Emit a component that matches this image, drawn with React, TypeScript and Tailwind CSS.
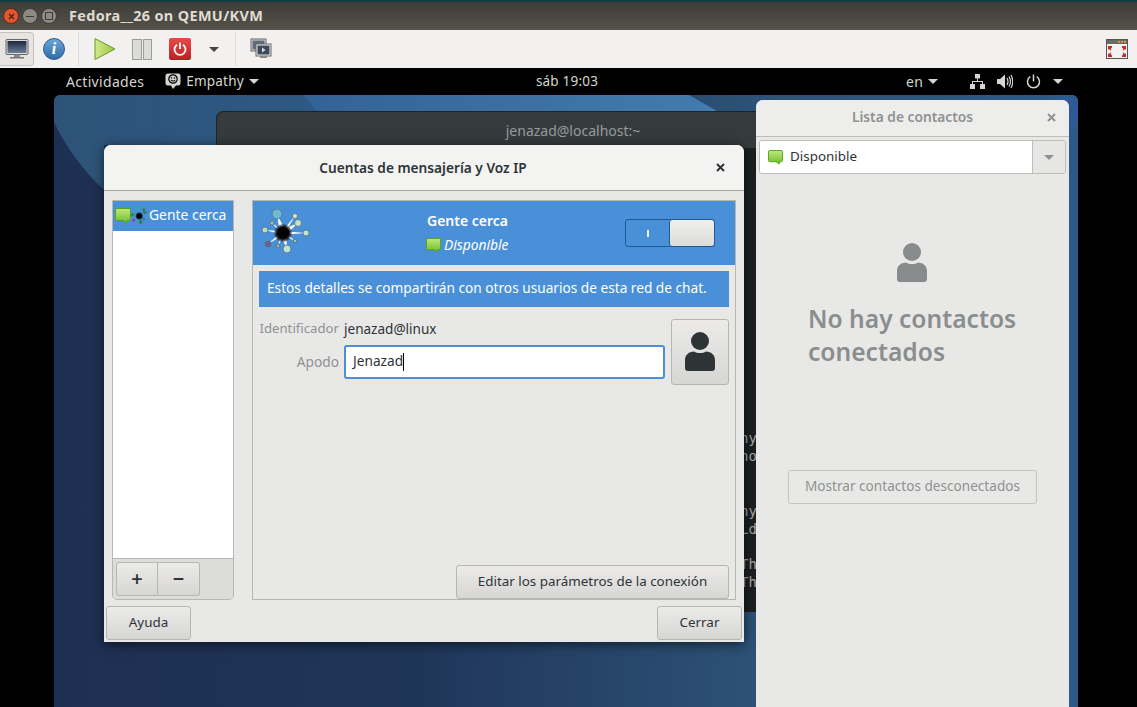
import React from "react";

const F = { fontFamily: '"Noto Sans", "Open Sans", sans-serif' };

function Bubble({ size = 16 }: { size?: number }) {
  return (
    <svg width={size} height={size} viewBox="0 0 16 16" className="shrink-0">
      <defs>
        <linearGradient id="bub" x1="0" y1="0" x2="0" y2="1">
          <stop offset="0" stopColor="#bdea7c" />
          <stop offset="1" stopColor="#6fbb2c" />
        </linearGradient>
      </defs>
      <path d="M2 .5h12a1.500 1.500 0 0 1 1.500 1.500v9a1.500 1.500 0 0 1-1.500 1.500h-2v2.500l-3.500-2.500H2A1.500 1.500 0 0 1 .5 11V2A1.500 1.500 0 0 1 2 .5z" fill="url(#bub)" stroke="#5aa016" strokeWidth="1" />
    </svg>
  );
}

const NODES: [number, number, number, string][] = [
  [16, 5, 5, "#6fb9d6"],
  [34, 7, 2.5, "#d5e8d0"],
  [37, 14, 3.5, "#c4e0cb"],
  [45, 24, 3, "#c4e4d0"],
  [34, 32, 1.7, "#a9c4b4"],
  [26, 40, 4, "#bfe0d2"],
  [17, 37, 2, "#94aaa8"],
  [7, 35, 3, "#6d5f95"],
  [4, 21, 3, "#bcdcc0"],
  [11, 14, 2, "#a8bdb8"],
];

function People({ size, mono = false }: { size: number; mono?: boolean }) {
  const id = mono ? "coreA" : "coreB";
  return (
    <svg width={size} height={size} viewBox="0 0 48 48" className="shrink-0">
      <defs>
        <radialGradient id={id}>
          <stop offset="0" stopColor="#000" />
          <stop offset="0.65" stopColor="#050505" />
          <stop offset="1" stopColor="#222" stopOpacity="0.35" />
        </radialGradient>
      </defs>
      {!mono && NODES.map(([x, y, r], i) => {
        const dx = x - 22;
        const dy = y - 24;
        const l = Math.hypot(dx, dy);
        const w = r > 3 ? 3.2 : 1.8;
        const nx = (-dy / l) * w;
        const ny = (dx / l) * w;
        return <path key={i} d={`M${22 + nx} ${24 + ny}L${x} ${y}L${22 - nx} ${24 - ny}z`} fill="#ffffff" />;
      })}
      {NODES.map(([x, y, r, c], i) => (
        <circle key={i} cx={x} cy={y} r={mono ? r * 0.9 + 1.5 : r} fill={mono ? (i % 3 === 0 ? "#3b9ec4" : i === 7 ? "#8a4aa0" : "#2f7d5a") : c} stroke={mono ? "none" : "#54707a"} strokeWidth="0.8" />
      ))}
      <circle cx="22" cy="24" r={mono ? 10 : 9} fill={`url(#${id})`} />
    </svg>
  );
}

function Person({ color, w = 30, h = 39 }: { color: string; w?: number; h?: number }) {
  return (
    <svg width={w} height={h} viewBox="0 0 30 39">
      <circle cx="15" cy="9" r="9" fill={color} />
      <path d="M9 19.500c3.500 2 8.500 2 12 0 5 0 9 3.500 9 8.500V36a3 3 0 0 1-3 3H3a3 3 0 0 1-3-3v-8C0 23 4 19.500 9 19.500z" fill={color} />
    </svg>
  );
}

function X({ color = "#2e3436" }: { color?: string }) {
  return (
    <svg width="9" height="9" viewBox="0 0 9 9">
      <path d="M1 1l7 7M8 1L1 8" stroke={color} strokeWidth="2" />
    </svg>
  );
}

function Caret({ color, w = 10, h = 5 }: { color: string; w?: number; h?: number }) {
  return (
    <svg width={w} height={h} viewBox="0 0 10 5" className="block">
      <path d="M0 0h10L5 5z" fill={color} />
    </svg>
  );
}

function Btn({ className, children }: { className: string; children: React.ReactNode }) {
  return (
    <div className={"flex items-center justify-center rounded-[3px] border border-[#b6b6b3] bg-gradient-to-b from-[#ecebea] to-[#d6d6d4] text-[#2e3436] text-[13.400px] pb-[1px] " + className}>
      {children}
    </div>
  );
}

function TitleBar() {
  return (
    <div className="h-[30px] shrink-0 bg-gradient-to-b from-[#3e3d38] to-[#55524a] border-t-[2px] border-[#123c44] flex items-center pl-[3px]">
      <div className="flex items-center gap-[3px]">
        <div className="w-[16px] h-[16px] rounded-full bg-[#e2562f] border border-[#5a2a18] flex items-center justify-center">
          <svg width="7" height="7" viewBox="0 0 7 7"><path d="M1 1l5 5M6 1L1 6" stroke="#40201a" strokeWidth="1.300" /></svg>
        </div>
        <div className="w-[16px] h-[16px] rounded-full bg-[#8c8a82] border border-[#3c3b37] flex items-center justify-center">
          <div className="w-[8px] h-[1px] bg-[#3c3b37]" />
        </div>
        <div className="w-[16px] h-[16px] rounded-full bg-[#8c8a82] border border-[#3c3b37] flex items-center justify-center">
          <div className="w-[8px] h-[8px] border border-[#3c3b37]" />
        </div>
      </div>
      <span className="ml-[12px] text-[14.450px] font-bold text-[#dfdbd2] tracking-[0.35px] leading-none">Fedora__26 on QEMU/KVM</span>
    </div>
  );
}

function Toolbar() {
  return (
    <div className="h-[38px] shrink-0 bg-[#f2f1ef] flex items-center relative">
      <div className="w-[34px] h-[34px] rounded-r-[4px] border border-l-0 border-[#c4c3c0] bg-[#e6e5e2] flex items-center justify-center">
        <svg width="24" height="24" viewBox="0 0 24 24">
          <defs>
            <linearGradient id="scr" x1="0" y1="0" x2="0" y2="1">
              <stop offset="0" stopColor="#1d2a3f" />
              <stop offset="1" stopColor="#6b7d96" />
            </linearGradient>
          </defs>
          <rect x="1" y="2.500" width="22" height="15" rx="1" fill="#dcdcdc" stroke="#666" />
          <rect x="2.500" y="4" width="19" height="12" fill="url(#scr)" />
          <rect x="9" y="17.500" width="6" height="2.500" fill="#888" />
          <rect x="5" y="20" width="14" height="1.500" fill="#777" />
        </svg>
      </div>
      <div className="ml-[9px] w-[22px] h-[22px] rounded-full bg-gradient-to-b from-[#6ea5d8] to-[#2f6ca8] border border-[#2a5a90] flex items-center justify-center text-white font-bold italic text-[16px] leading-none" style={{ fontFamily: '"Liberation Serif", serif' }}>
        i
      </div>
      <div className="ml-[13px] w-px h-[34px] bg-[#dddcd9]" />
      <div className="ml-[15px]">
        <svg width="22" height="22" viewBox="0 0 22 22" className="block">
          <defs>
            <linearGradient id="pl" x1="0" y1="0" x2="1" y2="0">
              <stop offset="0" stopColor="#d3e88d" />
              <stop offset="1" stopColor="#9cc744" />
            </linearGradient>
          </defs>
          <path d="M1 .5L21 11 1 21.500z" fill="url(#pl)" stroke="#6a9a1f" />
        </svg>
      </div>
      <div className="ml-[16px] flex gap-[1px]">
        <div className="w-[10px] h-[21px] bg-[#dcdcd8] border border-[#9c9c98]" />
        <div className="w-[9px] h-[21px] bg-[#dcdcd8] border border-[#9c9c98]" />
      </div>
      <div className="ml-[17px] w-[22px] h-[22px] rounded-[2px] bg-gradient-to-b from-[#e84a4a] to-[#bb2020] flex items-center justify-center">
        <svg width="16" height="16" viewBox="0 0 16 16" fill="none" stroke="#fff" strokeWidth="1.800">
          <path d="M5 3.800a5.500 5.500 0 1 0 6 0" />
          <path d="M8 1.500v6.500" />
        </svg>
      </div>
      <div className="ml-[18px]"><Caret color="#444" /></div>
      <div className="ml-[16px] w-px h-[34px] bg-[#dddcd9]" />
      <div className="ml-[14px]">
        <svg width="22" height="22" viewBox="0 0 22 22" className="block">
          <rect x="1" y="1" width="15" height="12" fill="#d8d8d8" stroke="#666" />
          <rect x="2.500" y="2.500" width="12" height="9" fill="#5d6b7b" />
          <rect x="6" y="6" width="15" height="12" fill="#eee" stroke="#666" />
          <rect x="7.500" y="7.500" width="12" height="9" fill="#3d4a5c" />
          <path d="M12 9.500l3.500 2.500-3.500 2.500z" fill="#ddd" />
          <rect x="10" y="18" width="7" height="2" fill="#888" />
        </svg>
      </div>
      <div className="ml-auto mr-[9px]">
        <svg width="22" height="20" viewBox="0 0 22 20" className="block">
          <rect x="0.500" y="0.500" width="21" height="19" fill="#f4f2f0" stroke="#555" />
          <rect x="1" y="1" width="20" height="4" fill="#6b6a67" />
          <path d="M12 2h2v1.500h-2zM15 2h2v1.500h-2zM18 2h2v1.500h-2z" fill="#e8a33a" />
          <path d="M2 7h4v1.500L4.500 10l1 1-1 .5L3 10 2 11zM20 7h-4v1.500l1.500 1.500-1 1 1 .5 1.500-1.500 1 1zM2 18h4v-1.500L4.500 15l1-1-1-.5L3 15l-1-1zM20 18h-4v-1.500l1.500-1.500-1-1 1-.5 1.500 1.500 1-1z" fill="#c42a2a" />
        </svg>
      </div>
    </div>
  );
}

function Panel() {
  return (
    <div className="h-[27px] shrink-0 bg-black text-[#d3d7cf] text-[13.500px] flex items-center relative tracking-[0.2px]">
      <div className="ml-[66px] text-[14px] tracking-[0.32px]">Actividades</div>
      <div className="ml-[21px] flex items-center">
        <svg width="16" height="17" viewBox="0 0 16 17">
          <path d="M3 .5h10a2.500 2.500 0 0 1 2.500 2.500v7a2.500 2.500 0 0 1-2.500 2.500h-2L8 16l-2-3.500H3A2.500 2.500 0 0 1 .5 10V3A2.500 2.500 0 0 1 3 .5z" fill="#d3d7cf" />
          <circle cx="8" cy="6" r="4.200" fill="none" stroke="#000" strokeWidth="1.200" />
          <circle cx="6.500" cy="5" r="0.800" fill="#000" />
          <circle cx="9.500" cy="5" r="0.800" fill="#000" />
          <path d="M5.800 7.200q2.200 2 4.400 0" stroke="#000" fill="none" />
        </svg>
        <span className="ml-[5px]">Empathy</span>
        <span className="ml-[5px]"><Caret color="#d3d7cf" /></span>
      </div>
      <div className="absolute left-0 right-0 top-0 h-full flex items-center justify-center">
        <span className="mr-[3px]">sáb 19:03</span>
      </div>
      <div className="ml-auto flex items-center relative mr-[74px]">
        <span className="text-[14px]">en</span>
        <span className="ml-[5px]"><Caret color="#d3d7cf" /></span>
        <svg className="ml-[32px]" width="15" height="15" viewBox="0 0 15 15" fill="#d3d7cf">
          <rect x="5" y="0" width="5" height="4.500" />
          <rect x="0" y="10" width="5" height="5" />
          <rect x="10" y="10" width="5" height="5" />
          <path d="M7 4.500h1V7h5v3h-1V8H3v2H2V7h5z" />
        </svg>
        <svg className="ml-[12px]" width="16" height="15" viewBox="0 0 16 15" fill="#d3d7cf">
          <path d="M0 5h3l5-4.500v14L3 10H0z" />
          <path d="M10 4q2 3.500 0 7M12 2.500q3 5 0 10M14 1q3.500 6.500 0 13" fill="none" stroke="#d3d7cf" strokeWidth="1.200" />
        </svg>
        <svg className="ml-[13px]" width="15" height="15" viewBox="0 0 15 15" fill="none" stroke="#d3d7cf" strokeWidth="1.500">
          <path d="M4.300 2.700a6 6 0 1 0 6.400 0" />
          <path d="M7.500 .5v7" />
        </svg>
        <span className="ml-[12px]"><Caret color="#d3d7cf" /></span>
      </div>
    </div>
  );
}

function Wallpaper() {
  return (
    <svg className="absolute inset-0" width="1024" height="612" viewBox="0 0 1024 612" preserveAspectRatio="none">
      <defs>
        <linearGradient id="wb" x1="0" y1="0" x2="1" y2="0">
          <stop offset="0" stopColor="#1d2f52" />
          <stop offset="0.35" stopColor="#1f3558" />
          <stop offset="0.7" stopColor="#2d5378" />
          <stop offset="1" stopColor="#2a5a88" />
        </linearGradient>
        <linearGradient id="wt" x1="0" y1="0" x2="1" y2="0">
          <stop offset="0" stopColor="#2e5378" />
          <stop offset="1" stopColor="#2d5a86" />
        </linearGradient>
        <linearGradient id="wh" x1="0" y1="0" x2="1" y2="0">
          <stop offset="0" stopColor="#336296" />
          <stop offset="1" stopColor="#447cae" />
        </linearGradient>
      </defs>
      <rect width="1024" height="612" fill="url(#wb)" />
      <path d="M0 0H300L330 50H50V95Q18 65 0 27z" fill="url(#wt)" />
      <path d="M250 0H635L670 20V50H290z" fill="url(#wh)" />
      <path d="M635 0H1024V30L1000 60V0z" fill="#2b5a94" />
      <path d="M1000 60L1024 30V612H1000z" fill="#2c5a88" />
    </svg>
  );
}

function Terminal() {
  const lines = [
    { y: 317, t: "ny" }, { y: 335, t: "no" }, { y: 390, t: "ny" }, { y: 408, t: "Ld" }, { y: 443, t: "Th" }, { y: 461, t: "Th" },
  ];
  return (
    <div className="absolute left-[216px] top-[111px] w-[560px] h-[501px] rounded-t-[7px] bg-[#1c2022] border border-[#1f2426] overflow-hidden">
      <div className="h-[36px] bg-[#353a3c] flex items-center justify-center text-[14px] text-[#979b9c] pl-[154px]">
        jenazad@localhost:~
      </div>
      {lines.map((l) => (
        <div key={l.y} className="absolute left-[523px] text-[14px] leading-[18px] text-[#a4a6a6]" style={{ top: l.y, fontFamily: '"DejaVu Sans Mono", monospace' }}>
          {l.t}
        </div>
      ))}
    </div>
  );
}

function Dialog() {
  return (
    <div className="absolute left-[104px] top-[145px] w-[640px] h-[497px] rounded-t-[7px] bg-[#e8e8e7] flex flex-col shadow-[0_2px_12px_rgba(0,0,0,0.6)]">
      <div className="h-[46px] shrink-0 rounded-t-[7px] bg-[#f3f3f2] border-b border-[#a8a8a5] flex items-center justify-center relative">
        <span className="text-[13.700px] font-semibold text-[#2e3436] pr-[2px] pt-[1px]">Cuentas de mensajería y Voz IP</span>
        <div className="absolute right-[19px] top-[18px]"><X /></div>
      </div>
      <div className="flex-1 flex flex-col px-[2px] pb-[2px]">
        <div className="flex-1 flex pl-[6px] pr-[6px] pt-[9px] pb-[6px]">
          <div className="w-[122px] h-[400px] shrink-0 border border-[#b6b6b3] rounded-b-[5px] flex flex-col overflow-hidden">
            <div className="h-[30px] bg-[#4a90d9] flex items-center pl-[2px] text-white text-[13.900px] pb-[1px]">
              <Bubble size={16} />
              <People size={18} mono />
              <span className="ml-[0px]">Gente cerca</span>
            </div>
            <div className="flex-1 bg-white border-b border-[#b6b6b3]" />
            <div className="h-[40px] bg-[#dcdcda] flex items-center pl-[3px]">
              <Btn className="w-[42px] h-[34px] rounded-r-none"><span className="text-[20px] font-semibold leading-none">+</span></Btn>
              <Btn className="w-[42px] h-[34px] rounded-l-none border-l-0"><span className="text-[20px] font-semibold leading-none">−</span></Btn>
            </div>
          </div>
          <div className="ml-[18px] w-[484px] h-[400px] border border-[#b6b6b3] flex flex-col">
            <div className="h-[64px] shrink-0 bg-[#4a90d9] flex items-center text-white relative">
              <div className="ml-[8px]"><People size={48} /></div>
              <div className="absolute left-[174px] top-[10px] text-[14px] font-semibold leading-[20px]">Gente cerca</div>
              <div className="absolute left-[173px] top-[34px] flex items-center gap-[3px] text-[13.800px] italic leading-[20px]">
                <Bubble size={15} />
                <span>Disponible</span>
              </div>
              <div className="absolute left-[372px] top-[18px] w-[90px] h-[28px] rounded-[3px] border border-[#1e5a96] bg-[#4a90d9] flex items-center overflow-hidden">
                <div className="w-[43px] flex items-center justify-center">
                  <div className="w-[2px] h-[7px] bg-[#e8f0f8]" />
                </div>
                <div className="flex-1 h-full rounded-[3px] bg-gradient-to-b from-[#f0f0ef] to-[#dcdcda] border-l border-[#1e5a96]" />
              </div>
            </div>
            <div className="flex-1 flex flex-col px-[6px] pt-[6px] pb-0">
              <div className="h-[36px] shrink-0 bg-[#4a90d9] text-white text-[13.660px] flex items-center pl-[8px] pb-[1px]">
                Estos detalles se compartirán con otros usuarios de esta red de chat.
              </div>
              <div className="flex mt-[12px]">
                <div className="flex-1 flex flex-col">
                  <div className="flex items-center h-[20px]">
                    <span className="w-[80px] text-right text-[#8f9292] text-[13.200px]">Identificador</span>
                    <span className="ml-[5px] text-[#2e3436] text-[13.550px]">jenazad@linux</span>
                  </div>
                  <div className="flex items-center mt-[6px] text-[13.700px]">
                    <span className="w-[80px] text-right text-[#8f9292]">Apodo</span>
                    <div className="ml-[5px] w-[321px] h-[34px] rounded-[3px] border-2 border-[#4a90d9] bg-white flex items-center pl-[7px] text-[#2e3436]">
                      <span className="pb-[2px]">Jenazad</span><span className="w-px h-[18px] bg-black" />
                    </div>
                  </div>
                </div>
                <Btn className="w-[58px] h-[66px] shrink-0"><Person color="#2e3436" /></Btn>
              </div>
              <div className="mt-auto flex justify-end pb-0">
                <Btn className="w-[273px] h-[34px]">Editar los parámetros de la conexión</Btn>
              </div>
            </div>
          </div>
        </div>
        <div className="flex justify-between">
          <Btn className="w-[85px] h-[34px]">Ayuda</Btn>
          <Btn className="w-[85px] h-[34px]">Cerrar</Btn>
        </div>
      </div>
    </div>
  );
}

function Contacts() {
  return (
    <div className="absolute left-[756px] top-[100px] w-[313px] h-[607px] rounded-t-[7px] bg-[#e8e8e7] flex flex-col">
      <div className="h-[37px] shrink-0 rounded-t-[7px] bg-[#ededec] border-b border-[#bdbdba] flex items-center justify-center relative pb-[1px]">
        <span className="text-[13.750px] font-semibold text-[#8f9292]">Lista de contactos</span>
        <div className="absolute right-[13px] top-[13px]"><X color="#8f9292" /></div>
      </div>
      <div className="mx-[3px] mt-[3px] h-[34px] rounded-[3px] border border-[#bdbdba] flex overflow-hidden">
        <div className="flex-1 bg-white flex items-center pl-[8px] text-[13.400px] text-[#2e3436] gap-[7px]">
          <Bubble size={15} />
          <span className="pb-[2px]">Disponible</span>
        </div>
        <div className="w-[33px] border-l border-[#bdbdba] bg-[#e6e6e4] flex items-center justify-center">
          <Caret color="#8f9292" />
        </div>
      </div>
      <div className="flex flex-col items-center mt-[69px] pr-[2px]">
        <Person color="#888b8c" />
      </div>
      <div className="ml-[52px] mt-[20px] text-[24.600px] font-semibold leading-[33px] text-[#8a8e8e]">
        No hay contactos
        <br />
        conectados
      </div>
      <div className="mt-[102px] ml-[32px] w-[249px] h-[34px] rounded-[3px] border border-[#c4c4c1] flex items-center justify-center text-[13.600px] text-[#8f9292] pb-[1px]">
        Mostrar contactos desconectados
      </div>
    </div>
  );
}

export default function App() {
  return (
    <div className="w-[1137px] h-[707px] flex flex-col overflow-hidden bg-black" style={F}>
      <TitleBar />
      <Toolbar />
      <Panel />
      <div className="flex-1 relative">
        <div className="absolute left-[54px] top-0 w-[1024px] h-[612px] rounded-t-[6px] overflow-hidden">
          <Wallpaper />
        </div>
        <div className="absolute left-0 -top-[95px] w-[1137px] h-[707px]">
          <Terminal />
          <Dialog />
          <Contacts />
        </div>
      </div>
    </div>
  );
}
